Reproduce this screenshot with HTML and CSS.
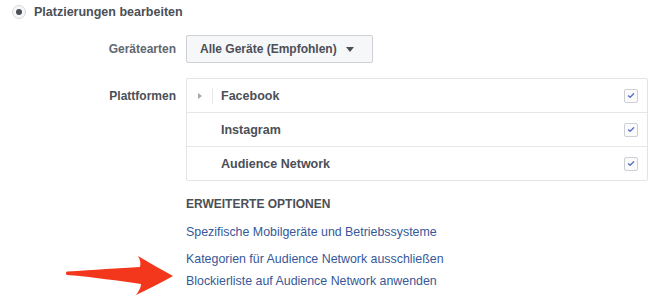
FILE: index.html
```html
<!DOCTYPE html>
<html lang="de">
<head>
<meta charset="utf-8">
<title>Platzierungen</title>
<link rel="stylesheet" href="styles.css">
</head>
<body>
<div class="page">
  <div class="head">
    <span class="radio"><span class="dot"></span></span>
    <span class="head-text">Platzierungen bearbeiten</span>
  </div>
  <div class="form">
    <div class="label label-device">Gerätearten</div>
    <div class="field">
      <button class="select">Alle Geräte (Empfohlen) <span class="caret"></span></button>
    </div>
    <div class="label label-platforms">Plattformen</div>
    <div class="field">
      <div class="table">
        <div class="row">
          <span class="toggle"><span class="tri"></span></span>
          <span class="name">Facebook</span>
          <span class="check"><svg viewBox="0 0 13 13" width="13" height="13"><path d="M3.8 6.9 L5.6 8.4 L9.4 4.6" fill="none" stroke="#5b70c6" stroke-width="1.5" stroke-linecap="round" stroke-linejoin="round"/></svg></span>
        </div>
        <div class="row">
          <span class="toggle none"></span>
          <span class="name">Instagram</span>
          <span class="check"><svg viewBox="0 0 13 13" width="13" height="13"><path d="M3.8 6.9 L5.6 8.4 L9.4 4.6" fill="none" stroke="#5b70c6" stroke-width="1.5" stroke-linecap="round" stroke-linejoin="round"/></svg></span>
        </div>
        <div class="row">
          <span class="toggle none"></span>
          <span class="name">Audience Network</span>
          <span class="check"><svg viewBox="0 0 13 13" width="13" height="13"><path d="M3.8 6.9 L5.6 8.4 L9.4 4.6" fill="none" stroke="#5b70c6" stroke-width="1.5" stroke-linecap="round" stroke-linejoin="round"/></svg></span>
        </div>
      </div>
    </div>
    <div class="label"></div>
    <div class="field options">
      <div class="opt-title">ERWEITERTE OPTIONEN</div>
      <a class="link link-first" href="#">Spezifische Mobilgeräte und Betriebssysteme</a>
      <a class="link link-second" href="#">Kategorien für Audience Network ausschließen</a>
      <a class="link" href="#">Blockierliste auf Audience Network anwenden</a>
    </div>
  </div>
  <svg class="arrow" viewBox="0 0 112 44" width="112" height="44">
    <path d="M3 17.5 C30 16 55 14 76 13 C77 9 76 5 74 2 C86 9 98 16 109 22 C98 28 85 35 72 41 C75 37 77 33 77 30 C55 27 30 23 3 21 C1.5 20 1.5 18.5 3 17.5 Z" fill="#f3371c"/>
  </svg>
</div>
</body>
</html>
```
FILE: styles.css
```css
* { box-sizing: border-box; }
html, body { margin: 0; padding: 0; background: #fff; }
body {
  font-family: "Liberation Sans", Arial, Helvetica, sans-serif;
  font-size: 12px;
  color: #4b4f56;
  width: 660px;
  height: 306px;
  overflow: hidden;
}
.page { position: relative; height: 306px; }
.head {
  display: flex;
  align-items: center;
  height: 24px;
  padding-left: 12px;
  gap: 8px;
}
.radio {
  width: 14px;
  height: 14px;
  border-radius: 50%;
  border: 1px solid #d6d8dc;
  background: #f6f7f9;
  display: flex;
  align-items: center;
  justify-content: center;
}
.dot { width: 6px; height: 6px; border-radius: 50%; background: #4b4f56; }
.head-text { font-weight: bold; font-size: 12.5px; color: #4b4f56; }

.form {
  display: grid;
  grid-template-columns: 176px 462px;
  column-gap: 10px;
  margin-top: 11px;
}
.label {
  text-align: right;
  font-weight: bold;
  font-size: 12px;
  color: #606770;
}
.label-device { line-height: 28px; }
.label-platforms { padding-top: 11px; color: #4b4f56; }
.field { min-width: 0; }
.select {
  display: inline-flex;
  align-items: center;
  gap: 8px;
  height: 28px;
  width: 187px;
  padding: 0 0 0 13px;
  border: 1px solid #ced0d4;
  border-radius: 2px;
  background: #f6f7f9;
  font-family: inherit;
  font-weight: bold;
  font-size: 12px;
  color: #4b4f56;
  margin-bottom: 15px;
}
.caret {
  width: 0; height: 0;
  border-left: 4px solid transparent;
  border-right: 4px solid transparent;
  border-top: 5px solid #4b4f56;
  margin-left: 1px;
}
.table {
  border: 1px solid #e2e4e8;
  border-radius: 2px;
}
.row {
  display: flex;
  align-items: center;
  height: 34px;
  border-bottom: 1px solid #e5e6ea;
}
.row:last-child { border-bottom: 0; height: 33px; }
.toggle {
  width: 26px;
  height: 16px;
  display: flex;
  align-items: center;
  justify-content: center;
  border-right: 1px solid #e5e6ea;
  margin-right: 8px;
}
.toggle.none { border-right-color: transparent; }
.tri {
  width: 0; height: 0;
  border-top: 3.5px solid transparent;
  border-bottom: 3.5px solid transparent;
  border-left: 4px solid #a4a8b0;
}
.name { flex: 1; font-weight: bold; font-size: 12.5px; color: #4b4f56; }
.check {
  width: 14px; height: 14px;
  border: 1px solid #ccd0d6;
  border-radius: 2px;
  background: #fbfbfc;
  margin-right: 9px;
  display: flex;
  align-items: center;
  justify-content: center;
}
.check svg { display: block; }
.options { padding-top: 15px; display: flex; flex-direction: column; align-items: flex-start; }
.opt-title { font-weight: bold; font-size: 12px; color: #4b4f56; line-height: 16px; margin-bottom: 12px; }
.link { color: #365899; text-decoration: none; font-size: 12.4px; line-height: 16px; }
.link-first { margin-bottom: 11px; }
.link-second { margin-bottom: 6px; }
.arrow { position: absolute; left: 64px; top: 254px; }
```
